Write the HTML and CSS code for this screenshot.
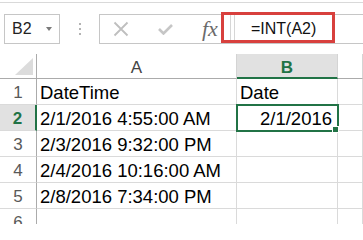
FILE: index.html
```html
<!DOCTYPE html>
<html>
<head>
<meta charset="utf-8">
<link rel="stylesheet" href="styles.css">
</head>
<body>
<div class="app">
  <div class="topline"></div>
  <div class="toolbar">
    <div class="namebox"><span class="nb-text">B2</span><span class="nb-arrow"></span></div>
    <div class="grip"><i></i><i></i><i></i></div>
    <div class="fbar">
      <svg class="ic-x" viewBox="0 0 16 16"><path d="M1.5 1.5 L14.5 14.5 M14.5 1.5 L1.5 14.5" stroke="#bfbfbf" stroke-width="1.8" fill="none"/></svg>
      <svg class="ic-ok" viewBox="0 0 15 11"><path d="M1 5 L5.5 9.5 L14 1" stroke="#c6c6c6" stroke-width="2.6" fill="none"/></svg>
      <span class="fx">fx</span>
      <span class="sep"></span><span class="sep sep2"></span>
      <span class="ftext">=INT(A2)</span>
      <div class="callout"></div>
    </div>
  </div>
  <div class="sheet">
    <div class="c corner"><svg class="tri" viewBox="0 0 18 17"><polygon points="18,0 18,17 0,17" fill="#dcdcdc"/></svg></div>
    <div class="c h">A</div>
    <div class="c h sel">B</div>
    <div class="c h"></div>

    <div class="c rh">1</div>
    <div class="c">DateTime</div>
    <div class="c">Date</div>
    <div class="c"></div>

    <div class="c rh sel">2</div>
    <div class="c">2/1/2016 4:55:00 AM</div>
    <div class="c active">2/1/2016<span class="handle"></span></div>
    <div class="c"></div>

    <div class="c rh">3</div>
    <div class="c">2/3/2016 9:32:00 PM</div>
    <div class="c"></div>
    <div class="c"></div>

    <div class="c rh">4</div>
    <div class="c">2/4/2016 10:16:00 AM</div>
    <div class="c"></div>
    <div class="c"></div>

    <div class="c rh">5</div>
    <div class="c">2/8/2016 7:34:00 PM</div>
    <div class="c"></div>
    <div class="c"></div>

    <div class="c rh">6</div>
    <div class="c"></div>
    <div class="c"></div>
    <div class="c"></div>
  </div>
</div>
</body>
</html>
```
FILE: styles.css
```css
body {
  margin: 0;
  background: #fff;
  font-family: "Liberation Sans", Arial, sans-serif;
}
.app {
  width: 363px;
  height: 224px;
  overflow: hidden;
  position: relative;
}
.topline {
  height: 2px;
  border-bottom: 1px solid #d9d9d9;
}
.toolbar {
  display: flex;
  margin-top: 11px;
  height: 30px;
}
.namebox {
  box-sizing: border-box;
  margin-left: 4px;
  width: 56px;
  height: 30px;
  border: 1px solid #c6c6c6;
  display: flex;
  align-items: center;
  padding: 0 7px;
  font-size: 16px;
  color: #222;
}
.nb-text {
  flex: 1;
  line-height: 1;
}
.nb-arrow {
  width: 0;
  height: 0;
  border-left: 3px solid transparent;
  border-right: 3px solid transparent;
  border-top: 4px solid #7a7a7a;
}
.grip {
  width: 39px;
  display: flex;
  flex-direction: column;
  align-items: center;
  justify-content: center;
  gap: 3px;
}
.grip i {
  display: block;
  width: 2px;
  height: 2px;
  background: #b3b3b3;
}
.fbar {
  flex: 1;
  box-sizing: border-box;
  height: 30px;
  border: 1px solid #c6c6c6;
  border-right: none;
  position: relative;
  display: flex;
  align-items: center;
}
.ic-x {
  margin-left: 13px;
  width: 16px;
  height: 16px;
  flex: none;
}
.ic-ok {
  margin-left: 29px;
  width: 15px;
  height: 11px;
  flex: none;
}
.fx {
  margin-left: 29px;
  width: 18px;
  font-family: "Liberation Serif", serif;
  font-style: italic;
  font-size: 22px;
  line-height: 1;
  color: #6b6b6b;
}
.sep {
  align-self: stretch;
  width: 1px;
  background: #d6d6d6;
  margin-left: 10px;
}
.sep2 {
  margin-left: 3px;
}
.ftext {
  margin-left: 16px;
  font-size: 16px;
  color: #111;
}
.callout {
  position: absolute;
  left: 121px;
  top: -3px;
  width: 114px;
  height: 31px;
  box-sizing: border-box;
  border: 3px solid #d8403d;
}
.sheet {
  margin-top: 10px;
  display: grid;
  grid-template-columns: 37px 200px 101px 1fr;
  grid-template-rows: 25px repeat(6, 26px);
}
.c {
  box-sizing: border-box;
  border-right: 1px solid #dadada;
  border-bottom: 1px solid #dadada;
  padding: 4px 3px 0;
  line-height: 20px;
  font-size: 18.5px;
  color: #000;
  white-space: nowrap;
}
.corner {
  border-right-color: #ababab;
  border-bottom-color: #ababab;
  display: flex;
  justify-content: flex-end;
  align-items: flex-end;
  padding: 0 3px 3px 0;
}
.tri {
  width: 18px;
  height: 17px;
}
.h {
  text-align: center;
  font-size: 17px;
  color: #444;
  border-bottom-color: #ababab;
  border-right-color: #d4d4d4;
}
.h.sel {
  background: #e1e1e1;
  color: #217346;
  font-weight: bold;
  border-bottom: 2px solid #217346;
}
.rh {
  text-align: center;
  font-size: 17px;
  color: #595959;
  border-right-color: #ababab;
  padding: 4px 0 0;
}
.rh.sel {
  background: #e1e1e1;
  color: #217346;
  font-weight: bold;
  border-right: 2px solid #217346;
}
.active {
  position: relative;
  outline: 2px solid #217346;
  outline-offset: -1px;
  text-align: right;
  padding-right: 5px;
}
.handle {
  position: absolute;
  right: -2px;
  bottom: -3px;
  width: 5px;
  height: 5px;
  background: #217346;
  border: 1px solid #fff;
}
```
